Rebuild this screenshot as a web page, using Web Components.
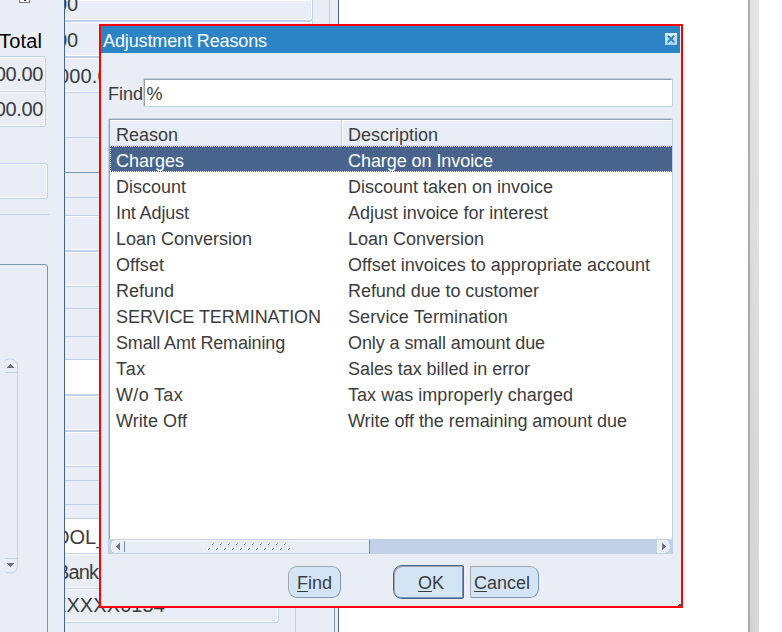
<!DOCTYPE html>
<html lang="en"><head><meta charset="utf-8"><title>Adjustment Reasons</title>
<style>
html,body{margin:0;height:100%;overflow:hidden;background:#fff}
body{font:18px/26px "Liberation Sans",Arial,sans-serif;color:#3b3c3e;--face:#e9edf5;--edge:#c0d0e6;--navy:#48648c;--steel:#7895b2}
</style></head><body>
<desktop-view></desktop-view>
<script>
const define=(name,html,init)=>customElements.define(name,class extends HTMLElement{
  constructor(){super();this.attachShadow({mode:'open'}).innerHTML=html;}
  connectedCallback(){if(init)init.call(this,this.shadowRoot);}
});

// A label whose letter spacing is set so that it takes up the given width.
define('fit-text',`<style>:host{display:inline-block;white-space:pre}span{display:inline-block}u{text-decoration:none;border-bottom:1px solid;display:inline-block;line-height:15px}</style><span></span>`,function(root){
  const s=root.querySelector('span'),t=this.getAttribute('label'),w=+this.getAttribute('w');
  if(this.hasAttribute('key')){const u=document.createElement('u');u.textContent=t[0];s.append(u,t.slice(1));}
  else s.textContent=t;
  if(w)s.style.letterSpacing=((w-s.getBoundingClientRect().width)/t.length)+'px';
});

define('form-field',`<style>:host{display:block;box-sizing:border-box;height:36px;width:46px;border:1px solid var(--edge);border-left:0;border-radius:0 3px 3px 0;box-shadow:inset -1px -1px #fff,inset 0 1px #fff;background:var(--face);overflow:hidden}
div{display:flex;justify-content:flex-end;line-height:34px;padding-right:2px}</style><div><slot></slot></div>`);

define('side-panel',`<style>
:host{display:flex;flex-direction:column;box-sizing:border-box;width:65px;height:632px;background:var(--face);border-right:1px solid var(--navy);overflow:hidden}
.mark,.total,form-field,hr,.group{flex:none}
.mark{width:9px;height:2px;margin-left:19px;border:1px solid #777;border-top:0;background:linear-gradient(#222,#222) 4px 0/2px 1px no-repeat #fff}
.total{display:flex;justify-content:flex-end;width:42px;height:26px;margin:25px 0 2px;color:#000;font-size:20px}
.num{font-size:20px}.num+.num{margin-top:-1px}.num+.f3{width:48px;margin-top:36px}
hr{width:49px;height:1px;border:0;margin:15px 0 49px;background:var(--edge)}
.group{box-sizing:border-box;width:48px;height:380px;border:1px solid var(--steel);border-left:0;border-radius:0 4px 0 0;padding:93px 0 0 5px}
svg{display:block}
</style><div class="mark"></div><div class="total"><fit-text label="Total" w="43"></fit-text></div>
<form-field class="num"><fit-text label="000.00" w="59"></fit-text></form-field><form-field class="num"><fit-text label="000.00" w="59"></fit-text></form-field>
<form-field class="f3"></form-field><hr>
<div class="group"><svg width="14" height="216" fill="none" stroke="#c0d0e6"><path d="M0 2.500C2 .5 8 .5 10 2.500Q12.500 4 12.500 7V208Q12.500 211 10 213.500C8 215.500 2 215.500 0 213.500M0 14.500H12M0 200.500H12"/><path d="M2 10h7v-1H8V8H7V7H6V6H5v1H4v1H3v1H2z M2 205h7v1H8v1H7v1H6v1H5v-1H4v-1H3v-1H2z" fill="#696f8b" stroke="none"/></svg></div>`);

// The form behind the dialog.
define('form-panel',`<style>
:host{display:block;position:relative;box-sizing:border-box;width:274px;height:632px;background:var(--face);border-right:1px solid var(--navy);overflow:hidden}
.s{box-sizing:border-box;border-bottom:1px solid var(--edge);font-size:20px;display:flex;align-items:center;width:265px;overflow:hidden;white-space:nowrap}
.field{width:248px;border-right:1px solid var(--edge);border-bottom-right-radius:3px;box-shadow:inset -1px -1px #fff,inset 0 1px #fff}
.field+.field:not(.one){box-shadow:inset -1px -1px #fff,inset 0 1px var(--edge),inset 0 2px #fff}
.white{background:#fff}.dark{border-color:var(--steel)}.low{width:214px}
.v{position:absolute;width:1px;background:var(--edge)}
fit-text{flex:none}
</style><div id="rows"></div><div class="v" style="left:264px;top:0;height:30px"></div><div class="v" style="left:230px;top:600px;height:32px"></div><div class="v" style="left:269px;top:600px;height:32px;background:#7895b2"></div>`,function(root){
  // Each strip: height, kind, text, text width, left offset, top offset.
  const rows=[[21,'field','00',22,-9,-12],[36,'field','00',22,-9,2],[36,'field','000.00',62,-7,2],[45,''],[35,'dark'],[25,''],[18,''],[35,'field'],[36,'field'],[22,''],[28,''],[23,''],[35,'white field'],[36,'field'],[36,'field'],[14,''],[24,''],[14,''],[35,'white field','OOL_',0,-11,2],[35,'field one','Bank',42,-9,2],[34,'field one low','XXXXX0154',112,-12,-1]];
  for(const [h,k,t,w,x,y] of rows){
    const d=document.createElement('div');d.className='s '+k;d.style.height=h+'px';
    if(t){const f=document.createElement('fit-text');f.setAttribute('label',t);f.setAttribute('w',w);
      f.style.marginLeft=x+'px';f.style.marginTop=y+'px';d.append(f);}
    root.getElementById('rows').append(d);
  }
});

define('title-bar',`<style>:host{display:flex;justify-content:space-between;box-sizing:border-box;height:27px;margin-right:1px;background:#2c84c4;color:#fff;line-height:31px;padding:0 3px 0 2px}
svg{margin-top:7px}</style><slot></slot>
<svg width="12" height="12"><defs><linearGradient id="g" x2="0" y2="1"><stop stop-color="#e0effb"/><stop offset="1" stop-color="#a9d0f2"/></linearGradient></defs><path fill="url(#g)" d="M0 0h12v12H0z"/><path fill="none" stroke="#2c84c4" stroke-width="2" d="M2.800 2.800l6.400 6.400M9.200 2.800l-6.400 6.400"/></svg>`);

define('find-row',`<style>:host{display:flex;height:29px;margin:25px 8px 0 7px;line-height:33px}
.label{width:35px}.input{box-sizing:border-box;flex:1;border:1px solid var(--edge);box-shadow:inset 1px 1px #999fa8;background:#fff;border-radius:0 2px 2px 0;padding-left:2.500px;line-height:31px}</style>
<div class="label"><fit-text label="Find" w="35"></fit-text></div><div class="input"><fit-text label="%"></fit-text></div>`);

define('reason-row',`<style>:host{display:flex;box-sizing:border-box;height:26px;padding-left:6px;line-height:30px}
:host([selected]){background:repeating-linear-gradient(90deg,#fff 0 1px,#48648c 1px 2px) 0 0/100% 1px no-repeat,repeating-linear-gradient(90deg,#fff 0 1px,#48648c 1px 2px) 0 100%/100% 1px no-repeat,repeating-linear-gradient(#fff 0 1px,#48648c 1px 2px) 0 0/1px 100% no-repeat,#48648c;color:#fff}
div{width:232px;flex:none}</style><div><slot name="reason"></slot></div><slot name="description"></slot>`);

define('scroll-bar',`<style>:host{display:block;height:15px;background:var(--edge);width:563px}svg{display:block}</style>
<svg width="563" height="15" shape-rendering="crispEdges"><path fill="#e9edf5" d="M0 1h260v13H0z"/><path fill="#fff" d="M5 1h255v1H5z"/><path fill="#c0d0e6" d="M0 0h5v2H3v2H2v7h1v2h2v2H0z"/><path fill="none" stroke="#fff" d="M5 2.500H4M3.500 3v2M2.500 5v6M3.500 11v2"/><path fill="#69738d" d="M11 4h-1v1H9v1H8v1H7v1h1v1h1v1h1v1h1z"/><path fill="#7890ae" d="M15 2h1v11h-1zM260 1h1v13h-1z"/><g id="grip"></g>
<path fill="#e9edf5" d="M548 1h9v1h2v1h1v2h1v5h-1v2h-1v1h-2v1h-9z"/><path fill="#fff" d="M548 1h10v1h-9v12h-1z"/><path fill="#69738d" d="M553 4h1v1h1v1h1v1h1v1h-1v1h-1v1h-1v1h-1z"/></svg>`,function(root){
  let p='';
  for(let i=0;i<10;i++)for(const [x,y] of [[102+i*8,4],[98+i*8,9]])p+=`<path fill="#fff" d="M${x} ${y}h2v1h-1v1h-1z"/><path fill="#7c9cbc" d="M${x+2} ${y}h1v1h-1v1h-1v-1h1z"/>`;
  p+='<path fill="#fff" d="M178 9h2v1h-1v1h-1z"/><path fill="#7c9cbc" d="M180 9h1v1h-1v1h-1v-1h1z"/>';
  root.getElementById('grip').innerHTML=p;
});

define('reason-list',`<style>:host{display:flex;flex-direction:column;box-sizing:border-box;height:436px;width:565px;margin:11px 0 0 7px;background:#fff;border:1px solid var(--edge);border-bottom-width:0;border-radius:2px 2px 0 0;box-shadow:inset 1px 1px #999fa8}
.head{display:flex;height:26px;margin:1px 0 0 1px;background:var(--face);box-shadow:inset 0 1px #fff,inset 0 -1px #d3dbe8}
.head div{box-sizing:border-box;line-height:31px;padding-left:6px}.head .a{width:232px;border-right:1px solid var(--edge);box-shadow:1px 0 #fff}
.rows{margin-left:1px;flex:1}</style>
<div class="head"><div class="a"><fit-text label="Reason" w="62"></fit-text></div><div><fit-text label="Description" w="90"></fit-text></div></div><div class="rows"></div><scroll-bar></scroll-bar>`,function(root){
  const data=[['Charges',68,'Charge on Invoice',145],['Discount',70,'Discount taken on invoice',205],['Int Adjust',73,'Adjust invoice for interest',200],['Loan Conversion',136,'Loan Conversion',136],['Offset',48,'Offset invoices to appropriate account',302],['Refund',58,'Refund due to customer',191],['SERVICE TERMINATION',205,'Service Termination',160],['Small Amt Remaining',169,'Only a small amount due',197],['Tax',30,'Sales tax billed in error',182],['W/o Tax',67,'Tax was improperly charged',225],['Write Off',71,'Write off the remaining amount due',279]];
  root.querySelector('.rows').innerHTML=data.map(([a,w,b,v],i)=>`<reason-row${i?'':' selected'}><fit-text slot="reason" label="${a}" w="${w}"></fit-text><fit-text slot="description" label="${b}" w="${v}"></fit-text></reason-row>`).join('');
});

define('dialog-button',`<style>:host{display:block;box-sizing:border-box;height:32px;background:#d3e4f5;border:1px solid;border-color:#a6a8ac #7895b2 #7895b2 #a6a8ac;border-radius:9px;line-height:33px;text-align:center}
:host([shape=default]){height:34px;border:1px solid #48648c;border-radius:9px 2px 2px 9px;box-shadow:inset 1px 1px #a6a8ac,inset -1px -1px #7895b2;line-height:35px;padding-left:5px}
:host([shape=end]){border-radius:2px 9px 9px 2px}</style><slot></slot>`);

define('reason-dialog',`<style>:host{display:block;box-sizing:border-box;width:584px;height:584px;border:2px solid #f00;background:linear-gradient(135deg,#0000 50%,#48648c 50%) 100% 100%/3px 3px no-repeat var(--face)}
.buttons{display:flex;align-items:center;margin:11px 0 0 187px}
.gap{flex:0 0 52px}.small{flex:0 0 6px}</style>
<title-bar><fit-text label="Adjustment Reasons" w="164"></fit-text></title-bar><find-row></find-row><reason-list></reason-list>
<div class="buttons"><dialog-button style="width:53px"><fit-text key label="Find" w="35"></fit-text></dialog-button><span class="gap"></span><dialog-button shape="default" style="width:71px"><fit-text key label="OK" w="26"></fit-text></dialog-button><span class="small"></span><dialog-button shape="end" style="width:69px;text-align:left;padding-left:3px"><fit-text key label="Cancel" w="56"></fit-text></dialog-button></div>`);

define('desktop-view',`<style>:host{display:flex;position:relative;width:782px;height:632px;background:#fff;overflow:hidden}
.edge{box-sizing:border-box;width:11px;margin-left:409px;border-left:2px solid #ababab;background:linear-gradient(90deg,#0000,#fff2),linear-gradient(#e2e2e2,#d4d4d4 75%,#d2d2d2)}
reason-dialog{position:absolute;left:99px;top:24px}</style>
<side-panel></side-panel><form-panel></form-panel><div class="edge"></div><reason-dialog></reason-dialog>`);
</script></body></html>
